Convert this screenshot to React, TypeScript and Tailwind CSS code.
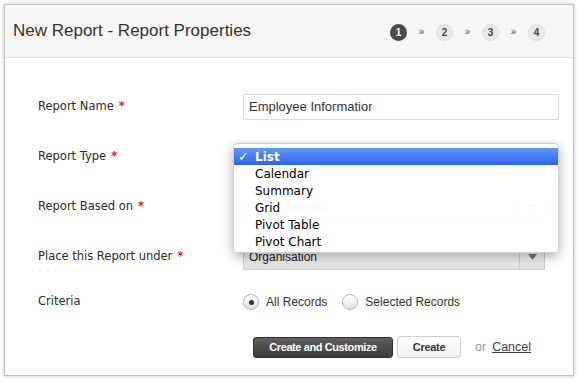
import React from "react";

const Req = () => <span className="ml-[5px] text-[#e0201a] font-bold">*</span>;

function Step({ n, active }: { n: number; active?: boolean }) {
  return (
    <div
      className={
        "w-[17px] h-[17px] rounded-full flex items-center justify-center text-[10px] font-bold " +
        (active
          ? "bg-[#4a4a4a] text-white"
          : "bg-[#e9e9e9] text-[#444] border border-[#dcdcdc]")
      }
    >
      {n}
    </div>
  );
}

const Sep = () => (
  <span className="w-[9px] text-center text-[10px] text-[#555] leading-none">»</span>
);

function Radio({ checked }: { checked?: boolean }) {
  return (
    <div className="w-[16px] h-[16px] rounded-full border border-[#b5b5b5] bg-gradient-to-b from-white to-[#e2e2e2] flex items-center justify-center shadow-[inset_0_1px_1px_rgba(255,255,255,0.8)]">
      {checked && <div className="w-[5px] h-[5px] rounded-full bg-[#333]" />}
    </div>
  );
}

function Row({ label, req, children, h = "h-[50px]" }: { label: string; req?: boolean; children?: React.ReactNode; h?: string }) {
  return (
    <div className={"grid grid-cols-[205px_1fr] items-center " + h}>
      <div className="text-[11.5px] text-[#2b2b2b] font-['DejaVu_Sans',sans-serif]">
        {label}
        {req && <Req />}
      </div>
      <div>{children}</div>
    </div>
  );
}

function SelectBox({ text, faded }: { text?: string; faded?: boolean }) {
  return (
    <div className="flex h-[25px] w-[302px] border border-[#cfcfcf] bg-gradient-to-b from-[#fafafa] to-[#e4e4e4]">
      <div className={"flex-1 px-[5px] flex items-center text-[12px] " + (faded ? "text-[#333]" : "text-[#222]")}>{text}</div>
      <div className="w-[25px] border-l border-[#cfcfcf] flex items-center justify-center">
        <svg width="9" height="6" viewBox="0 0 9 6"><path d="M0 0h9L4.5 6z" fill="#777" /></svg>
      </div>
    </div>
  );
}

export default function App() {
  const items = ["List", "Calendar", "Summary", "Grid", "Pivot Table", "Pivot Chart"];
  return (
    <div className="w-[580px] h-[382px] bg-white pt-[4px] pl-[4px] font-['Liberation_Sans',Arial,sans-serif]">
      <div className="relative w-[570px] h-[372px] border border-[#c4c4c4] bg-white shadow-[0_0_4px_rgba(0,0,0,0.25)]">
        {/* Header */}
        <div className="h-[53px] bg-[#f6f6f6] border-b border-[#dedede] flex items-center justify-between pl-[8px] pr-[28px]">
          <div className="text-[17px] text-[#333] pb-[1px]">New Report - Report Properties</div>
          <div className="flex items-center gap-[10px] pt-[2px]">
            <Step n={1} active />
            <Sep />
            <Step n={2} />
            <Sep />
            <Step n={3} />
            <Sep />
            <Step n={4} />
          </div>
        </div>

        {/* Form */}
        <div className="pl-[33px] pt-[24px]">
          <Row label="Report Name" req>
            <div className="w-[316px] h-[26px] border border-[#d6dde6] flex items-center px-[5px] text-[13px] text-[#333] overflow-hidden whitespace-nowrap">
              <span className="w-[123px] overflow-hidden inline-block whitespace-nowrap">Employee Information</span>
            </div>
          </Row>
          <Row label="Report Type" req>
            <SelectBox />
          </Row>
          <Row label="Report Based on" req>
            <SelectBox text="All Department" faded />
          </Row>
          <Row label="Place this Report under" req>
            <SelectBox text="Organisation" />
          </Row>
          <Row label="Criteria" h="h-[40px]">
            <div className="flex items-center text-[12px] text-[#333]">
              <Radio checked />
              <span className="ml-[7px]">All Records</span>
              <div className="ml-[15px]">
                <Radio />
              </div>
              <span className="ml-[7px]">Selected Records</span>
            </div>
          </Row>
          <div className="grid grid-cols-[215px_1fr] mt-[14px]">
            <div />
            <div className="flex items-center">
              <div className="w-[140px] h-[21px] rounded-[3px] bg-gradient-to-b from-[#5e5e5e] to-[#3c3c3c] border border-[#333] text-white text-[11px] font-bold tracking-[-0.4px] flex items-center justify-center">
                Create and Customize
              </div>
              <div className="ml-[4px] w-[64px] h-[22px] rounded-[3px] bg-gradient-to-b from-white to-[#f1f1f1] border border-[#cfcfcf] text-[#333] text-[11px] font-bold tracking-[-0.3px] flex items-center justify-center">
                Create
              </div>
              <span className="ml-[14px] text-[12.5px] text-[#999]">or</span>
              <span className="ml-[6px] text-[12.5px] text-[#444] underline">Cancel</span>
            </div>
          </div>
        </div>

        {/* Dropdown menu overlay */}
        <div className="absolute left-[228px] top-[138px] w-[326px] h-[110px] rounded-[4px] bg-white/[0.96] border border-[#d0d0d0] shadow-[0_4px_12px_rgba(0,0,0,0.3)] py-[4px] font-['DejaVu_Sans',sans-serif] text-[12px] text-black">
          {items.map((it, i) => (
            <div
              key={it}
              className={
                "relative h-[17px] flex items-center pl-[21px] " +
                (i === 0 ? "bg-gradient-to-b from-[#6494f5] to-[#2c63e9] text-white font-bold" : "")
              }
            >
              {i === 0 && <span className="absolute left-[4px] text-[13px] font-bold">✓</span>}
              {it}
            </div>
          ))}
        </div>
      </div>
    </div>
  );
}
